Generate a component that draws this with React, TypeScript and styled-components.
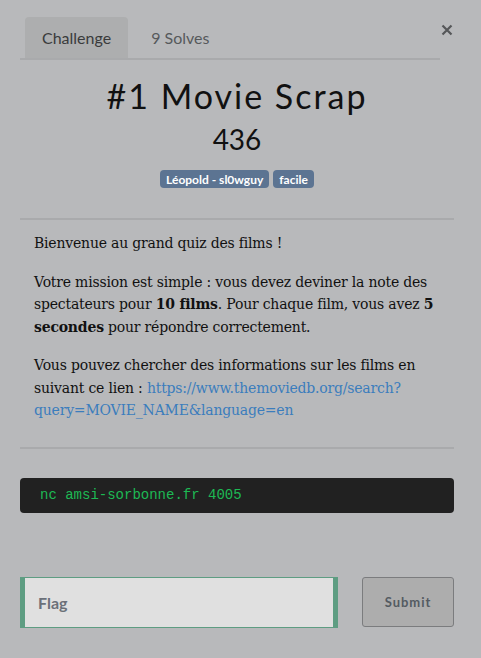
import React from "react";
import styled, { createGlobalStyle } from "styled-components";

const Global = createGlobalStyle`
  html, body { margin: 0; padding: 0; background: #b8b9bb; }
  body { font-family: Lato, "Noto Sans", sans-serif; }
`;

const Modal = styled.div`
  width: 434px;
  margin-left: 20px;
  padding-top: 17px;
  padding-bottom: 30px;
`;

const Header = styled.div`
  position: relative;
`;

const Tabs = styled.ul`
  display: flex;
  gap: 6px;
  list-style: none;
  margin: 0;
  padding: 0 0 0 5px;
  width: 415px;
  border-bottom: 2px solid #a9aaac;
`;

const Tab = styled.li<{ $active?: boolean }>`
  height: 41px;
  display: flex;
  align-items: center;
  padding: 0 17px;
  font-size: 16px;
  color: ${(p) => (p.$active ? "#3a3b3c" : "#56595c")};
  background: ${(p) => (p.$active ? "#adaeaf" : "transparent")};
  border-radius: 4px 4px 0 0;
`;

const Close = styled.button`
  position: absolute;
  right: 1px;
  top: 7px;
  width: 12px;
  height: 12px;
  padding: 0;
  border: 0;
  background: none;
  display: flex;
`;

const Title = styled.h3`
  margin: 16px 0 0;
  text-align: center;
  font-family: Lato, sans-serif;
  font-weight: 400;
  font-size: 34px;
  line-height: 1.2;
  letter-spacing: 2px;
  color: #111;
`;

const Points = styled.h4`
  margin: 6px 0 0;
  text-align: center;
  font-weight: 400;
  font-size: 28px;
  line-height: 1.2;
  color: #111;
`;

const Tags = styled.div`
  display: flex;
  justify-content: center;
  gap: 4px;
  margin-top: 14px;
`;

const Badge = styled.span`
  height: 18px;
  display: inline-flex;
  align-items: center;
  padding: 0 6px;
  border-radius: 4px;
  background: #5c7492;
  color: #fff;
  font-weight: 700;
  font-size: 12px;
`;

const Rule = styled.hr<{ $top: number; $bottom: number }>`
  border: 0;
  border-top: 2px solid #a9aaac;
  margin: ${(p) => p.$top}px 0 ${(p) => p.$bottom}px;
`;

const Description = styled.div`
  padding: 0 14px;
  font-family: "DejaVu Serif", serif;
  font-size: 14px;
  letter-spacing: -0.2px;
  line-height: 22.5px;
  color: #111;
  p { margin: 0 0 16px; }
  a { color: #3b7dbd; text-decoration: none; }
`;

const Code = styled.pre`
  margin: 29px 0 0;
  padding: 8px 20px;
  background: #212121;
  border-radius: 4px;
  font-family: "Liberation Mono", monospace;
  font-size: 14px;
  line-height: 19px;
  color: #1db954;
`;

const FlagRow = styled.form`
  display: flex;
  gap: 24px;
  margin-top: 64px;
`;

const FlagInput = styled.input`
  box-sizing: border-box;
  width: 318px;
  height: 51px;
  padding: 0 13px;
  background: #e0e0e0;
  border: 1px solid #5e9d82;
  border-left-width: 5px;
  border-right-width: 5px;
  font-family: Lato, sans-serif;
  font-weight: 700;
  font-size: 16px;
  outline: none;
  &::placeholder { color: #6b7079; opacity: 1; }
`;

const Submit = styled.button`
  box-sizing: border-box;
  width: 92px;
  height: 50px;
  background: #adadad;
  border: 1px solid #7b7c7e;
  border-radius: 3px;
  font-family: Lato, sans-serif;
  font-weight: 700;
  font-size: 13px;
  letter-spacing: 1px;
  color: #545b62;
`;

export default function App() {
  return (
    <>
      <Global />
      <Modal>
        <Header>
          <Tabs>
            <Tab $active>Challenge</Tab>
            <Tab>9 Solves</Tab>
          </Tabs>
          <Close aria-label="Close">
            <svg width="12" height="12" viewBox="0 0 12 12">
              <path d="M1.5 1.5 L10.5 10.5 M10.5 1.5 L1.5 10.5" stroke="#555759" strokeWidth="2.2" />
            </svg>
          </Close>
        </Header>
        <Title>#1 Movie Scrap</Title>
        <Points>436</Points>
        <Tags>
          <Badge>Léopold - sl0wguy</Badge>
          <Badge>facile</Badge>
        </Tags>
        <Rule $top={30} $bottom={12} />
        <Description>
          <p>Bienvenue au grand quiz des films !</p>
          <p>
            Votre mission est simple : vous devez deviner la note des spectateurs pour <b>10 films</b>. Pour
            chaque film, vous avez <b>5 secondes</b> pour répondre correctement.
          </p>
          <p>
            Vous pouvez chercher des informations sur les films en suivant ce lien :{" "}
            <a href="#">https://www.themoviedb.org/search?query=MOVIE_NAME&amp;language=en</a>
          </p>
        </Description>
        <Rule $top={25} $bottom={0} />
        <Code>nc amsi-sorbonne.fr 4005</Code>
        <FlagRow onSubmit={(e) => e.preventDefault()}>
          <FlagInput placeholder="Flag" />
          <Submit type="submit">Submit</Submit>
        </FlagRow>
      </Modal>
    </>
  );
}
